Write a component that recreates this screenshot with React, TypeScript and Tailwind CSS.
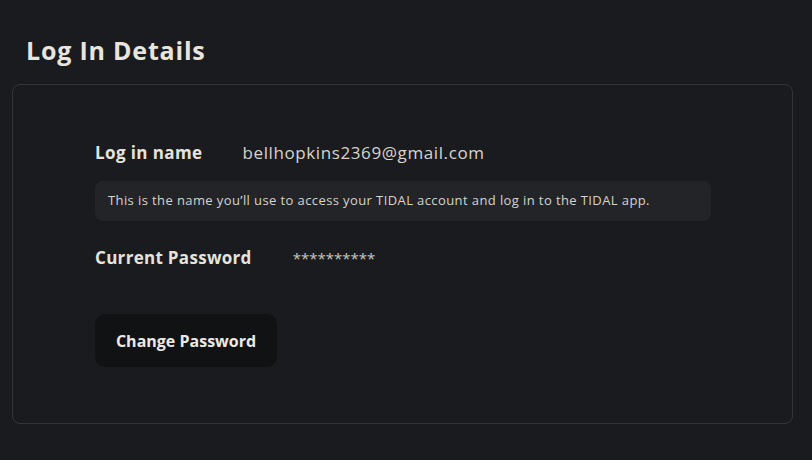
import React from 'react';

const font = { fontFamily: '"Open Sans", Lato, sans-serif' };

export default function App() {
  return (
    <div className="min-h-[460px] w-full bg-[#1a1b1e] pl-3 pr-[19px] pt-[34px] pb-9 text-[#e6e3dd]" style={font}>
      <h1 className="pl-[14px] text-[25px] font-bold leading-8 tracking-[0.8px] text-[#e8e5df]">Log In Details</h1>
      <section className="mt-[18px] h-[340px] rounded-lg border border-[#33343a] pl-[82px] pt-[56px]">
        <div className="flex items-center gap-[40px]">
          <span className="text-[17px] font-bold leading-6 tracking-[0.4px]">Log in name</span>
          <span className="text-[17px] leading-6 tracking-[0.6px] text-[#d8d4cc]">bellhopkins2369@gmail.com</span>
        </div>
        <div className="mt-[16px] flex h-10 w-[616px] items-center rounded-lg bg-[#232428] px-[13px] text-[13px] tracking-[0.4px] text-[#d6d3cd]">
          This is the name you’ll use to access your TIDAL account and log in to the TIDAL app.
        </div>
        <div className="mt-[25px] flex items-center gap-[41px]">
          <span className="text-[17px] font-bold leading-6 tracking-[0.3px]">Current Password</span>
          <span className="text-[15px] leading-6 text-[#c9c6c0]">**********</span>
        </div>
        <button className="mt-[44px] h-[53px] w-[182px] rounded-[10px] bg-[#111214] text-[16px] font-bold text-[#ece9e4]">
          Change Password
        </button>
      </section>
    </div>
  );
}
